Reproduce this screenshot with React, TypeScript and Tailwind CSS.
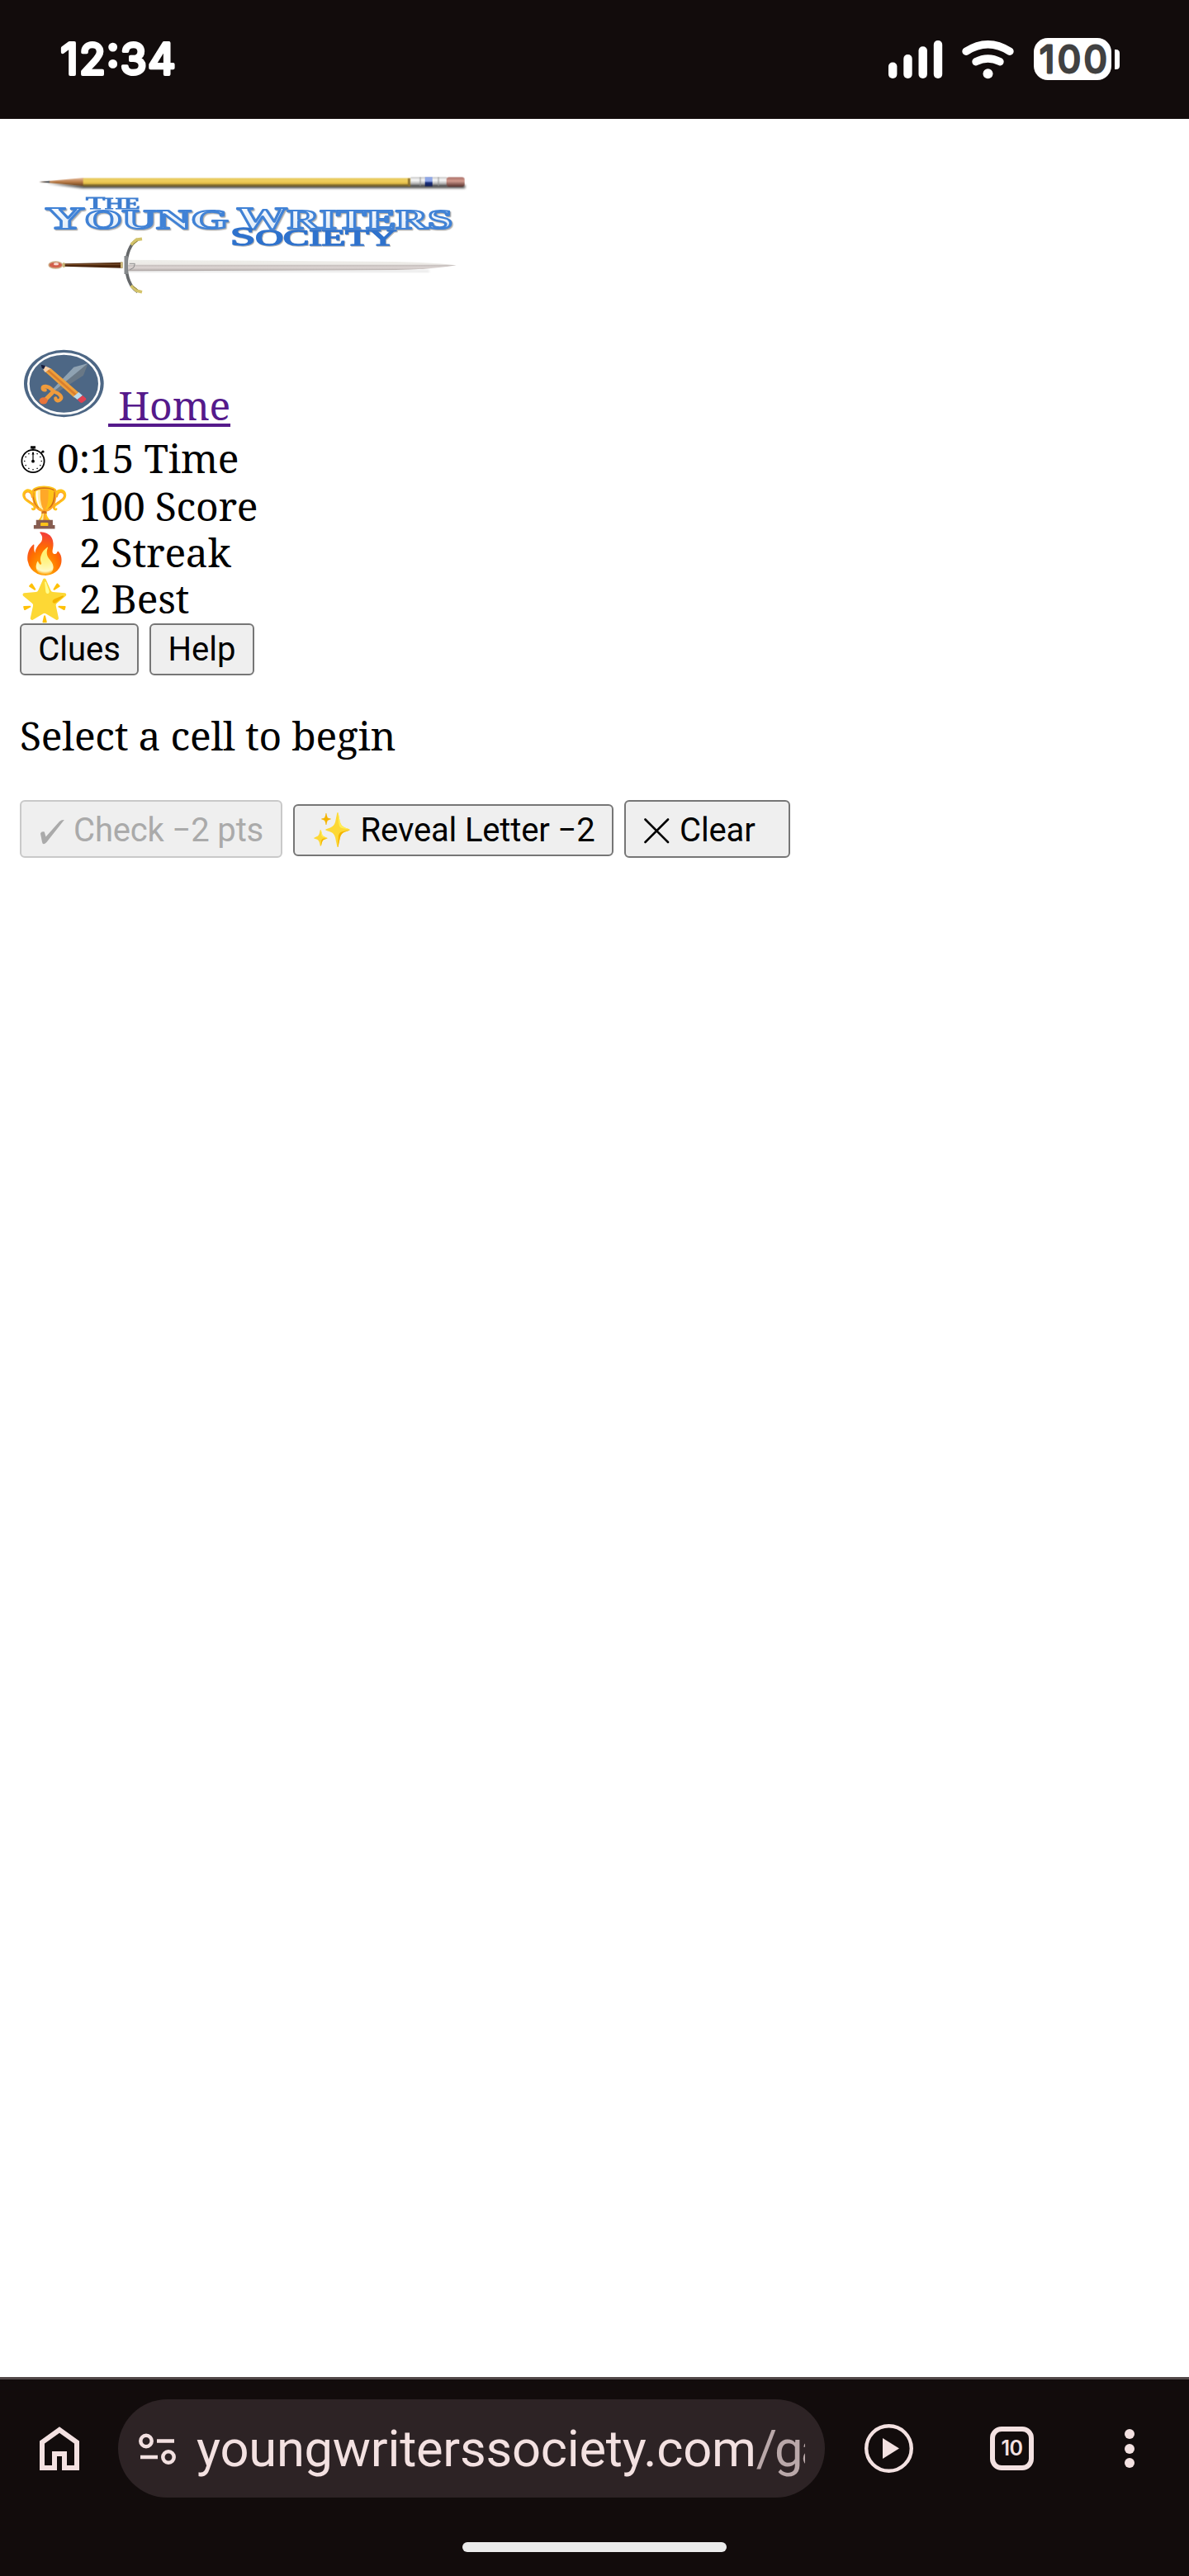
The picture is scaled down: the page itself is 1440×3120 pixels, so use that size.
import type { ReactNode } from 'react'

const stats = [
    { icon: '🏆', value: '100', label: 'Score' },
    { icon: '🔥', value: '2', label: 'Streak' },
    { icon: '🌟', value: '2', label: 'Best' },
]

function StatusBar() {
    return (
        <header className="flex h-36 shrink-0 items-start justify-between bg-[#120c0c] pl-[70px] pr-[83px] pt-[36px]">
            <svg width="150" height="72" viewBox="70 36 150 72" className="font-[Inter,sans-serif]">
                <text
                    x="73.5"
                    y="90"
                    fontSize="51.5"
                    textLength="139"
                    lengthAdjust="spacing"
                    fill="#fff"
                    stroke="#fff"
                    strokeWidth="4"
                    strokeLinejoin="round"
                >
                    12<tspan dy="-4.5">:</tspan><tspan dy="4.5">34</tspan>
                </text>
            </svg>
            <svg width="282" height="72" viewBox="1075 36 282 72" className="font-[Inter,sans-serif]">
                <g fill="#fff">
                    <rect x="1076" y="75.5" width="10.4" height="19.5" rx="5" />
                    <rect x="1094.3" y="66" width="10.4" height="29" rx="5" />
                    <rect x="1112.5" y="56.3" width="10.4" height="38.7" rx="5" />
                    <rect x="1130.8" y="49" width="10.4" height="46" rx="5" />
                    <circle cx="1196.5" cy="89.2" r="6" />
                    <rect x="1252" y="46" width="94" height="51" rx="17" />
                    <path d="M1350 60h1.5q4.5 0 4.5 4.5v15q0 4.5-4.500 4.500h-1.500z" />
                </g>
                <g fill="none" stroke="#fff" strokeWidth="9.4" strokeLinecap="round">
                    <path d="M1170 62.2q26.5-17 53 0" />
                    <path d="M1182 74.7q14.5-7.600 29 0" />
                </g>
                <text
                    x="1259"
                    y="87.7"
                    fontSize="45"
                    textLength="82"
                    lengthAdjust="spacing"
                    fill="#414141"
                    stroke="#414141"
                    strokeWidth="2.8"
                    strokeLinejoin="round"
                >
                    100
                </text>
            </svg>
        </header>
    )
}

function Logo() {
    return (
        <svg width="552" height="232" viewBox="24 168 552 232" className="block font-['Liberation_Serif',serif]">
            <defs>
                <linearGradient id="body" x1="0" y1="0" x2="0" y2="1">
                    <stop offset="0" stopColor="#e3c65c" />
                    <stop offset=".35" stopColor="#f2d05c" />
                    <stop offset=".65" stopColor="#dfb844" />
                    <stop offset=".8" stopColor="#85702f" />
                    <stop offset="1" stopColor="#6b5a2a" />
                </linearGradient>
                <linearGradient id="cone" x1="0" y1="0" x2="0" y2="1">
                    <stop offset="0" stopColor="#e5b899" />
                    <stop offset=".5" stopColor="#b87a45" />
                    <stop offset="1" stopColor="#5f3d1d" />
                </linearGradient>
                <linearGradient id="metal" x1="0" y1="0" x2="0" y2="1">
                    <stop offset="0" stopColor="#c9c9c9" />
                    <stop offset=".35" stopColor="#fbfbfb" />
                    <stop offset=".7" stopColor="#b5b5b5" />
                    <stop offset="1" stopColor="#3c3c3c" />
                </linearGradient>
                <linearGradient id="band" x1="0" y1="0" x2="0" y2="1">
                    <stop offset="0" stopColor="#8ea6e6" />
                    <stop offset=".45" stopColor="#8ea6e6" />
                    <stop offset=".6" stopColor="#1d3280" />
                    <stop offset="1" stopColor="#101c50" />
                </linearGradient>
                <linearGradient id="eraser" x1="0" y1="0" x2="0" y2="1">
                    <stop offset="0" stopColor="#a96c64" />
                    <stop offset=".4" stopColor="#d39c90" />
                    <stop offset="1" stopColor="#56302c" />
                </linearGradient>
                <linearGradient id="blade" x1="0" y1="0" x2="0" y2="1">
                    <stop offset="0" stopColor="#eeeeea" />
                    <stop offset=".4" stopColor="#eceae6" />
                    <stop offset=".5" stopColor="#c9c2c0" />
                    <stop offset=".7" stopColor="#dcd4d2" />
                    <stop offset="1" stopColor="#aaa3a1" />
                </linearGradient>
                <linearGradient id="face" x1="0" y1="0" x2="0" y2="1">
                    <stop offset="0" stopColor="#fff" />
                    <stop offset="1" stopColor="#dbe9f8" />
                </linearGradient>
                <filter id="shadow" x="-5%" y="-200%" width="110%" height="500%">
                    <feGaussianBlur stdDeviation="4" />
                </filter>
                <filter id="soft" x="-2%" y="-10%" width="104%" height="120%">
                    <feGaussianBlur stdDeviation="2" />
                </filter>
            </defs>
            <g transform="translate(20 200) scale(.33333)">
                <path d="M110 66L240 84H1630V72H240z" fill="#000" opacity=".7" filter="url(#shadow)" />
                <g filter="url(#soft)">
                    <path d="M82 61L243 46L250 77z" fill="url(#cone)" />
                    <path d="M82 61L120 57L120 65z" fill="#4b5258" />
                    <rect x="242" y="47" width="1190" height="31" fill="url(#body)" />
                    <rect x="1422" y="48" width="9" height="29" fill="#8b7130" />
                    <rect x="1431" y="43" width="134" height="34" rx="4" fill="url(#metal)" />
                    <path d="M1467 44v32M1533 44v32" stroke="#8f8f8f" strokeWidth="5" opacity=".6" />
                    <rect x="1484" y="43" width="27" height="34" fill="url(#band)" />
                    <rect x="1562" y="44" width="66" height="34" rx="9" fill="url(#eraser)" />
                </g>

                <g filter="url(#soft)">
                    <text
                        x="252"
                        y="159"
                        fontSize="64"
                        fill="#3d7dd0"
                        stroke="#3d7dd0"
                        strokeWidth="3"
                        textLength="196"
                        lengthAdjust="spacingAndGlyphs"
                    >
                        T<tspan fontSize="54">HE</tspan>
                    </text>
                    <g
                        className="[filter:drop-shadow(4px_4px_2px_rgba(70,70,70,.45))]"
                        fill="url(#face)"
                        stroke="#4182d6"
                        strokeWidth="6.5"
                        strokeLinejoin="round"
                        fontWeight="700"
                    >
                        <text x="104" y="231" fontSize="116" textLength="666" lengthAdjust="spacingAndGlyphs">
                            Y<tspan fontSize="102">OUNG</tspan>
                        </text>
                        <text x="800" y="231" fontSize="116" textLength="784" lengthAdjust="spacingAndGlyphs">
                            W<tspan fontSize="102">RITERS</tspan>
                        </text>
                    </g>
                    <text
                        className="[filter:drop-shadow(3px_3px_2px_rgba(70,70,70,.4))]"
                        x="776"
                        y="291"
                        fontSize="94"
                        fill="#2f72cd"
                        stroke="#2f72cd"
                        strokeWidth="4"
                        textLength="606"
                        lengthAdjust="spacingAndGlyphs"
                    >
                        S<tspan fontSize="80">OCIETY</tspan>
                    </text>
                </g>

                <path d="M400 385H1500v2H400z" fill="#000" opacity=".35" filter="url(#shadow)" />
                <g filter="url(#soft)">
                    <path d="M405 344L1380 351Q1520 354 1598 364Q1520 378 1380 381L405 385z" fill="url(#blade)" />
                    <path d="M410 358h20l-4 14-14 8" fill="none" stroke="#8b8b8b" strokeWidth="3" />
                    <path d="M172 358L385 353V374L172 368z" fill="#4b2811" />
                    <path d="M176 361L380 360" stroke="#8a5b33" strokeWidth="3" />
                    <path d="M172 355v16M382 352v22" stroke="#c9b678" strokeWidth="8" />
                    <ellipse cx="142" cy="363" rx="25" ry="12" fill="#d2604c" stroke="#cdb08a" strokeWidth="4" />
                    <ellipse cx="144" cy="359" rx="9" ry="5" fill="#f8d9d0" />
                    <path d="M440 270C385 300 385 428 440 460" fill="none" stroke="#65686a" strokeWidth="11" />
                    <path d="M398 330v66" stroke="#85898b" strokeWidth="13" />
                    <path d="M416 289L436 271L456 268M416 438L436 456L456 461" fill="none" stroke="#d3c36a" strokeWidth="11" />
                    <path d="M424 288L440 276M424 440L440 452" stroke="#8b7b33" strokeWidth="3" />
                </g>
            </g>
        </svg>
    )
}

function Emblem() {
    return (
        <svg width="107" height="90" viewBox="24 420 107 90" className="block">
            <g transform="translate(0 400) scale(.33333)">
                <ellipse cx="232" cy="193.5" rx="145" ry="122" fill="#4d6785" />
                <ellipse cx="232" cy="194" rx="129" ry="109" fill="none" stroke="#fff" strokeWidth="8" />
                <path d="M192 214L268 134L320 120L205 224z" fill="#8fa2b2" />
                <path d="M320 120L303 164L208 226L199 219z" fill="#697886" />
                <g fill="none" stroke="#ef9b3c" strokeLinecap="round" strokeLinejoin="round">
                    <path
                        d="M164 217C152 218 151 203 167 204C184 205 190 221 201 225C215 229 229 243 219 252C211 259 203 256 202 247"
                        strokeWidth="13"
                    />
                    <path d="M189 228L168 249" strokeWidth="15" />
                </g>
                <ellipse cx="158" cy="256" rx="15" ry="12.5" fill="#e8743b" />
                <path d="M184 138L288 228L270 245L164 151z" fill="#eda03c" />
                <path d="M177 143L281 234L275 240L170 147z" fill="#d97f2e" />
                <path d="M164 130L184 139L164 153L157 143z" fill="#f8cfa8" />
                <path d="M149 125L165 129L159 141L152 137z" fill="#161c3d" />
                <path d="M286 225L300 237L281 252L267 241z" fill="#b9dcec" />
                <path d="M300 237L311 246Q316 251 309 256L301 262Q296 266 290 261L281 252z" fill="#e04152" />
            </g>
        </svg>
    )
}

function Stopwatch() {
    const ticks = [0, 30, 60, 90, 120, 150, 180, 210, 240, 270, 300, 330]
    return (
        <svg width="32" height="36" viewBox="25 539 32 36" className="block">
            <circle cx="41" cy="558.5" r="13.6" fill="none" stroke="#000" strokeWidth="1.8" />
            <rect x="38" y="540.3" width="6" height="3.2" />
            <path d="M41 543v3M50.500 549l2-2" stroke="#000" strokeWidth="1.2" />
            <circle cx="53" cy="547" r="1.6" />
            <path d="M41 548v11" stroke="#000" strokeWidth="1.2" />
            <path d="M41 547.500l-1.600 3h3.200z" />
            <circle cx="41" cy="558.7" r="1.9" />
            {ticks.map((deg) => (
                <circle key={deg} cx="41" cy="548.3" r=".8" transform={`rotate(${deg} 41 558.5)`} />
            ))}
        </svg>
    )
}

function Button({ className = '', disabled = false, children }: { className?: string; disabled?: boolean; children: ReactNode }) {
    const tone = disabled ? 'border-[#c9c9c9] text-[#aaaaaa]' : 'border-[#767676] text-black'
    return (
        <button
            disabled={disabled}
            className={`flex items-center whitespace-pre rounded-[6px] border-2 bg-[#efefef] font-[Roboto,sans-serif] text-[40px] leading-[47px] ${tone} ${className}`}
        >
            {children}
        </button>
    )
}

function BrowserBar() {
    return (
        <footer className="flex h-[241px] shrink-0 flex-col border-t-[3px] border-[#524848] bg-[#120c0c]">
            <div className="mt-6 flex h-[119px] items-center">
                <svg width="48" height="53" viewBox="0 0 48 53" className="ml-12 shrink-0">
                    <path d="M3 50V19L24 4L45 19V50H30V33H18V50z" fill="none" stroke="#f3e1e1" strokeWidth="6" />
                </svg>
                <div className="ml-[47px] flex h-[119px] w-[856px] shrink-0 items-center rounded-full bg-[#2d2325] pl-[25px]">
                    <svg width="45" height="38" viewBox="0 0 45 38" fill="none" stroke="#f3e1e1" strokeWidth="4.5" className="shrink-0">
                        <circle cx="9" cy="9.5" r="6.7" />
                        <path d="M22 9.500h21M2 29h21" />
                        <circle cx="36" cy="29" r="6.7" />
                    </svg>
                    <div className="ml-[25px] w-[737px] overflow-hidden whitespace-nowrap font-[Roboto,sans-serif] text-[61.5px] leading-[72px] tracking-[-0.25px] text-[#f3e1e1]">
                        youngwriterssociety.com<span className="tracking-[-3px] text-[#b9a8a9]">/ga</span>
                    </div>
                </div>
                <svg width="59" height="59" viewBox="0 0 59 59" className="ml-12 shrink-0">
                    <circle cx="29.5" cy="29.5" r="27.3" fill="none" stroke="#f3e1e1" strokeWidth="4.4" />
                    <path d="M22 17V42L42 29.500z" fill="#f3e1e1" />
                </svg>
                <div className="ml-[93px] flex h-[53px] w-[53px] shrink-0 items-center justify-center rounded-[14px] border-[6px] border-[#f3e1e1] font-[Inter,sans-serif] text-[25px] font-semibold leading-none tracking-[-0.5px] text-[#f3e1e1]">
                    10
                </div>
                <div className="ml-[110px] flex flex-col gap-[5.5px]">
                    <div className="size-3 rounded-full bg-[#f3e1e1]" />
                    <div className="size-3 rounded-full bg-[#f3e1e1]" />
                    <div className="size-3 rounded-full bg-[#f3e1e1]" />
                </div>
            </div>
            <div className="mx-auto mt-[54px] h-3 w-80 rounded-full bg-[#ebebeb]" />
        </footer>
    )
}

export default function App() {
    return (
        <div className="flex h-[3120px] w-[1440px] flex-col bg-white">
            <StatusBar />
            <main className="flex-1 p-6 font-['Noto_Serif','Noto_Color_Emoji',serif] text-[48px] leading-[56px] tracking-[-0.25px] text-black">
                <Logo />
                <div className="flex h-[126px] items-start">
                    <div className="mt-5">
                        <Emblem />
                    </div>
                    <a href="#" className="mt-[63px] text-[#551a8b] underline decoration-[4px] underline-offset-[4px]">
                        &nbsp;Home
                    </a>
                </div>
                <div className="flex h-[59px]">
                    <div className="mr-[13px] mt-[13px]">
                        <Stopwatch />
                    </div>
                    <span className="mt-px">0:15 Time</span>
                </div>
                {stats.map((s) => (
                    <div key={s.label} className="h-14">
                        {s.icon} {s.value} {s.label}
                    </div>
                ))}
                <div className="mt-[2px] flex gap-[13px] tracking-normal">
                    <Button className="h-[63px] w-36 justify-center">Clues</Button>
                    <Button className="h-[63px] w-[127px] justify-center">Help</Button>
                </div>
                <p className="mt-[45px]">Select a cell to begin</p>
                <div className="mt-[50px] flex items-start gap-[13px] tracking-[-0.15px]">
                    <Button disabled className="h-[70px] w-[318px] pl-[22px] pt-[3px]">
                        <svg width="32" height="34" viewBox="48 988 32 34" className="mr-[9px] mt-[2px]">
                            <path
                                d="M77.8 991L56.500 1018Q52 1022.500 51 1018L49 1007.500Q50 1004.500 53.800 1005.500L55.500 1011.500L72 993Q74.500 990.600 77.800 991z"
                                fill="#aaaaaa"
                            />
                        </svg>
                        Check −2 pts
                    </Button>
                    <Button className="mt-[5px] h-[63px] w-[388px] pl-5">✨ Reveal Letter −2</Button>
                    <Button className="h-[70px] w-[201px] pl-[22px] pt-[3px]">
                        <svg width="31" height="31" viewBox="0 0 31 31" className="mr-3 mt-[2px]">
                            <path d="M1.500 1.500L29 29M29 1.500L1.500 29" stroke="#000" strokeWidth="2.6" strokeLinecap="round" />
                        </svg>
                        Clear
                    </Button>
                </div>
            </main>
            <BrowserBar />
        </div>
    )
}
